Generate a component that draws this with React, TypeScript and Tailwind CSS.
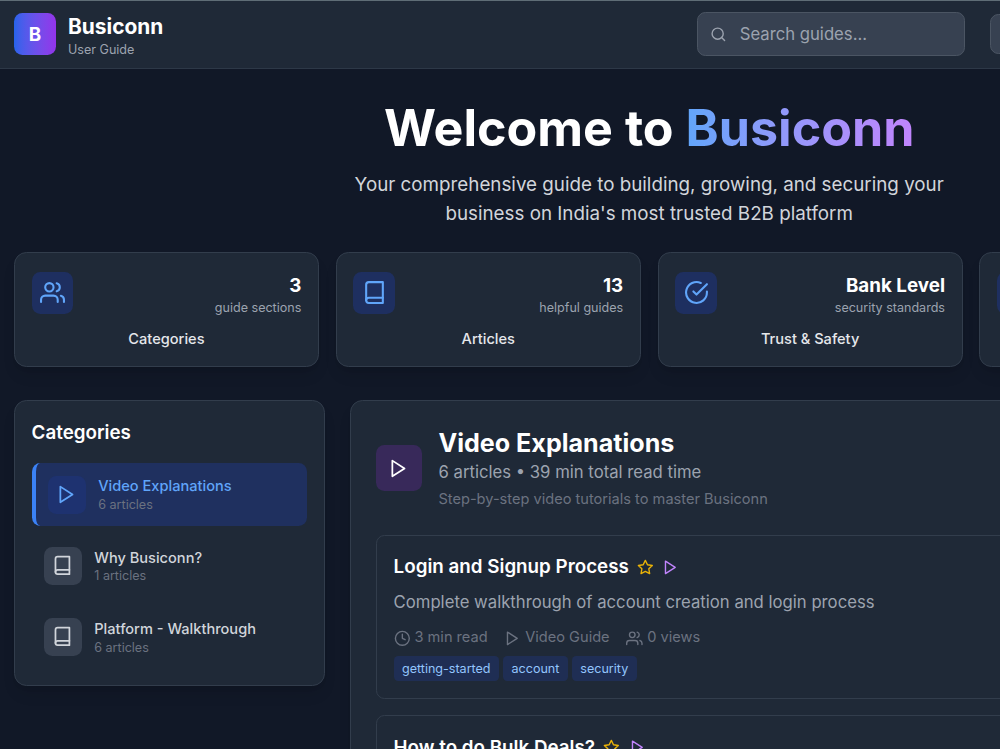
import { FiBook, FiCheckCircle, FiClock, FiPlay, FiSearch, FiStar, FiUsers } from "react-icons/fi";
import type { IconType } from "react-icons";

interface Stat {
  icon: IconType;
  value: string;
  caption: string;
  label: string;
}

interface Article {
  title: string;
  description?: string;
  readTime?: string;
  views?: string;
  tags?: string[];
}

const stats: Stat[] = [
  { icon: FiUsers, value: "3", caption: "guide sections", label: "Categories" },
  { icon: FiBook, value: "13", caption: "helpful guides", label: "Articles" },
  { icon: FiCheckCircle, value: "Bank Level", caption: "security standards", label: "Trust & Safety" },
  { icon: FiClock, value: "", caption: "", label: "" },
];

const categories = [
  { icon: FiPlay, name: "Video Explanations", count: 6, active: true },
  { icon: FiBook, name: "Why Busiconn?", count: 1, active: false },
  { icon: FiBook, name: "Platform - Walkthrough", count: 6, active: false },
];

const articles: Article[] = [
  {
    title: "Login and Signup Process",
    description: "Complete walkthrough of account creation and login process",
    readTime: "3 min read",
    views: "0 views",
    tags: ["getting-started", "account", "security"],
  },
  { title: "How to do Bulk Deals?" },
];

function Header() {
  return (
    <header className="h-[69px] border-t border-b border-t-[#5f6d76] border-b-[#2d3847] bg-[#1f2937]">
      <div className="flex h-[66px] items-center justify-between pl-[14px]">
        <div className="flex items-center gap-[12px]">
          <div className="flex h-[42px] w-[42px] items-center justify-center rounded-[8.4px] bg-gradient-to-r from-[#2563eb] to-[#9333ea]">
            <span className="pt-[2px] text-[18.8px] font-bold text-white">B</span>
          </div>
          <div className="pt-[4px]">
            <h1 className="text-[20.9px] leading-[26px] font-bold text-white">Busiconn</h1>
            <p className="text-[12.55px] leading-[19px] text-[#9ca3af]">User Guide</p>
          </div>
        </div>
        <div className="flex items-center gap-[25px]">
          <div className="flex h-[44px] w-[268px] items-center gap-[13px] rounded-[8.4px] border border-[#4b5563] bg-[#374151] pl-[12px]">
            <FiSearch className="h-[16.7px] w-[16.7px] text-[#9ca3af]" />
            <input
              type="text"
              placeholder="Search guides..."
              className="w-[200px] bg-transparent pt-px text-[16.7px] text-white outline-none placeholder:text-[#9ca3af]"
            />
          </div>
          <button className="h-[40px] w-[310px] rounded-[8.4px] border border-[#4b5563] bg-[#374151]" />
        </div>
      </div>
    </header>
  );
}

function StatCard({ icon: Icon, value, caption, label }: Stat) {
  return (
    <div className="h-[115px] rounded-[12.5px] border border-[#323d4c] bg-[#1f2937] p-[16.7px] shadow-lg">
      <div className="mb-[13px] flex h-[46px] items-center justify-between">
        <div className="rounded-[8.4px] bg-[#1e2f60] p-[8.4px]">
          <Icon className="h-[25px] w-[25px] text-[#60a5fa]" />
        </div>
        <div className="pt-[2px] text-right">
          <div className="text-[18.8px] leading-[29.3px] font-bold text-white">{value}</div>
          <div className="text-[12.55px] leading-[16.7px] text-[#9ca3af]">{caption}</div>
        </div>
      </div>
      <h3 className="text-center text-[14.6px] leading-[21.5px] font-medium text-[#e5e7eb]">{label}</h3>
    </div>
  );
}

function Sidebar() {
  return (
    <aside className="h-[286px] w-[311px] shrink-0 rounded-[12.5px] border border-[#323d4c] bg-[#1f2937] p-[16.7px] shadow-lg">
      <h2 className="mb-[16px] text-[18.8px] leading-[29.3px] font-semibold text-white">Categories</h2>
      <nav className="flex flex-col gap-[8.4px]">
        {categories.map(({ icon: Icon, name, count, active }) => (
          <button
            key={name}
            className={
              active
                ? "flex h-[62.7px] items-center gap-[12.5px] rounded-[8.4px] border-l-4 border-[#3b82f6] bg-[#1f305f] px-[12.5px] text-left"
                : "flex h-[62.7px] items-center gap-[12.5px] rounded-[8.4px] px-[12.5px] text-left"
            }
          >
            <div
              className={
                active
                  ? "rounded-[8.4px] bg-[#1e3270] p-[8.4px] text-[#60a5fa]"
                  : "rounded-[8.4px] bg-[#374151] p-[8.4px] text-[#d1d5db]"
              }
            >
              <Icon className="h-[20.9px] w-[20.9px]" />
            </div>
            <div className="pt-[1.2px]">
              <div
                className={
                  active
                    ? "text-[14.6px] leading-[20.9px] font-medium text-[#60a5fa]"
                    : "text-[14.6px] leading-[20.9px] font-medium text-[#d1d5db]"
                }
              >
                {name}
              </div>
              <div className="text-[12.55px] leading-[16.7px] text-[#6b7280]">{count} articles</div>
            </div>
          </button>
        ))}
      </nav>
    </aside>
  );
}

function ArticleCard({ title, description, readTime, views, tags }: Article) {
  return (
    <article className="h-[164px] rounded-[8.4px] border border-[#323d4c] p-[16.7px]">
      <div className="flex items-center gap-[8.4px]">
        <h3 className="text-[18.8px] leading-[29.3px] font-semibold text-white">{title}</h3>
        <FiStar className="h-[16.7px] w-[16.7px] text-[#eab308]" />
        <FiPlay className="h-[16.7px] w-[16.7px] text-[#c084fc]" />
      </div>
      {description && (
        <>
          <p className="mt-[8.4px] text-[16.7px] leading-[25px] text-[#9ca3af]">{description}</p>
          <div className="mt-[12.5px] flex items-center gap-[16.7px] text-[14.6px] leading-[20.9px] text-[#6b7280]">
            <span className="flex items-center gap-[4.2px]">
              <FiClock className="h-[16.7px] w-[16.7px]" />
              {readTime}
            </span>
            <span className="flex items-center gap-[4.2px]">
              <FiPlay className="h-[16.7px] w-[16.7px]" />
              Video Guide
            </span>
            <span className="flex items-center gap-[4.2px]">
              <FiUsers className="h-[16.7px] w-[16.7px]" />
              {views}
            </span>
          </div>
          <div className="mt-[7.5px] flex gap-[4.2px]">
            {tags?.map((tag) => (
              <span
                key={tag}
                className="rounded-[4.2px] bg-[#1f2e54] px-[8.4px] pt-[5px] pb-[3.4px] text-[12.55px] leading-[16.7px] text-[#93c5fd]"
              >
                {tag}
              </span>
            ))}
          </div>
        </>
      )}
    </article>
  );
}

export default function App() {
  return (
    <div className="h-[749px] w-[1000px] overflow-hidden bg-[#111827] font-['Inter',sans-serif]">
      <div className="w-[1300px]">
        <Header />
        <main className="w-[1284.5px] pt-[33.5px] pl-[13.9px]">
          <section className="text-center">
            <h1 className="text-[50.2px] leading-[50.2px] font-bold text-white">
              Welcome to{" "}
              <span className="bg-gradient-to-r from-[#60a5fa] to-[#c084fc] bg-clip-text text-transparent">
                Busiconn
              </span>
            </h1>
            <p className="mx-auto mt-[17px] w-[650px] text-[18.8px] leading-[29.3px] text-[#d1d5db]">
              Your comprehensive guide to building, growing, and securing your business on India's most trusted B2B
              platform
            </p>
          </section>

          <section className="mt-[23.7px] grid grid-cols-4 gap-[16.7px]">
            {stats.map((stat, i) => (
              <StatCard key={i} {...stat} />
            ))}
          </section>

          <div className="mt-[33.4px] flex items-start gap-[25px]">
            <Sidebar />
            <section className="flex-1 rounded-[12.5px] border border-[#323d4c] bg-[#1f2937] p-[25px] shadow-lg">
              <div className="mb-[24.2px] flex items-center gap-[16.7px]">
                <div className="rounded-[8.4px] bg-[#38295a] p-[12.5px]">
                  <FiPlay className="h-[20.9px] w-[20.9px] text-white" />
                </div>
                <div>
                  <h2 className="pt-[0.6px] text-[25.1px] leading-[33.5px] font-bold text-white">
                    Video Explanations
                  </h2>
                  <p className="text-[16.7px] leading-[25px] text-[#9ca3af]">6 articles • 39 min total read time</p>
                  <p className="mt-[4px] text-[14.6px] leading-[20.9px] text-[#6b7280]">
                    Step-by-step video tutorials to master Busiconn
                  </p>
                </div>
              </div>
              <div className="flex flex-col gap-[16.7px]">
                {articles.map((article) => (
                  <ArticleCard key={article.title} {...article} />
                ))}
              </div>
            </section>
          </div>
        </main>
      </div>
    </div>
  );
}
